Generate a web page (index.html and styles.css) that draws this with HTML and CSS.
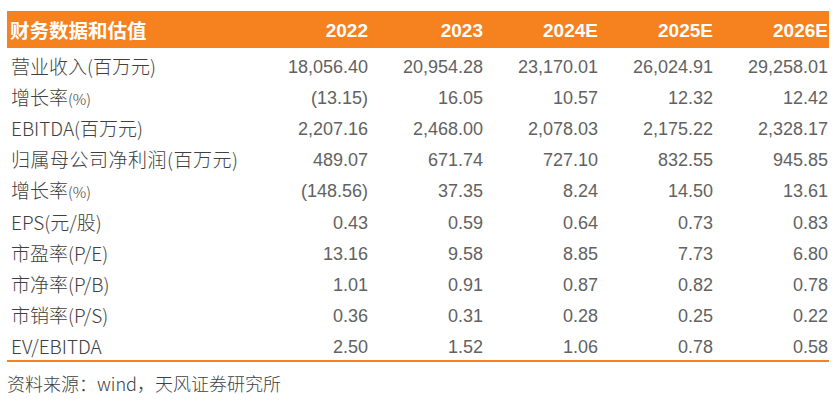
FILE: index.html
```html
<!DOCTYPE html>
<html lang="zh-CN">
<head>
<meta charset="utf-8">
<link rel="stylesheet" href="styles.css">
</head>
<body>
<div class="page">
  <div class="table">
    <div class="row head">
      <div class="cell label">财务数据和估值</div>
      <div class="cell">2022</div>
      <div class="cell">2023</div>
      <div class="cell">2024E</div>
      <div class="cell">2025E</div>
      <div class="cell">2026E</div>
    </div>
    <div class="row">
      <div class="cell label">营业收入(百万元)</div>
      <div class="cell">18,056.40</div><div class="cell">20,954.28</div><div class="cell">23,170.01</div><div class="cell">26,024.91</div><div class="cell">29,258.01</div>
    </div>
    <div class="row">
      <div class="cell label">增长率<span class="pct">(%)</span></div>
      <div class="cell">(13.15)</div><div class="cell">16.05</div><div class="cell">10.57</div><div class="cell">12.32</div><div class="cell">12.42</div>
    </div>
    <div class="row">
      <div class="cell label">EBITDA(百万元)</div>
      <div class="cell">2,207.16</div><div class="cell">2,468.00</div><div class="cell">2,078.03</div><div class="cell">2,175.22</div><div class="cell">2,328.17</div>
    </div>
    <div class="row">
      <div class="cell label wide">归属母公司净利润(百万元)</div>
      <div class="cell">489.07</div><div class="cell">671.74</div><div class="cell">727.10</div><div class="cell">832.55</div><div class="cell">945.85</div>
    </div>
    <div class="row">
      <div class="cell label">增长率<span class="pct">(%)</span></div>
      <div class="cell">(148.56)</div><div class="cell">37.35</div><div class="cell">8.24</div><div class="cell">14.50</div><div class="cell">13.61</div>
    </div>
    <div class="row">
      <div class="cell label">EPS(元/股)</div>
      <div class="cell">0.43</div><div class="cell">0.59</div><div class="cell">0.64</div><div class="cell">0.73</div><div class="cell">0.83</div>
    </div>
    <div class="row">
      <div class="cell label">市盈率(P/E)</div>
      <div class="cell">13.16</div><div class="cell">9.58</div><div class="cell">8.85</div><div class="cell">7.73</div><div class="cell">6.80</div>
    </div>
    <div class="row">
      <div class="cell label">市净率(P/B)</div>
      <div class="cell">1.01</div><div class="cell">0.91</div><div class="cell">0.87</div><div class="cell">0.82</div><div class="cell">0.78</div>
    </div>
    <div class="row">
      <div class="cell label">市销率(P/S)</div>
      <div class="cell">0.36</div><div class="cell">0.31</div><div class="cell">0.28</div><div class="cell">0.25</div><div class="cell">0.22</div>
    </div>
    <div class="row last">
      <div class="cell label">EV/EBITDA</div>
      <div class="cell">2.50</div><div class="cell">1.52</div><div class="cell">1.06</div><div class="cell">0.78</div><div class="cell">0.58</div>
    </div>
  </div>
  <div class="source">资料来源：wind，天风证券研究所</div>
</div>
</body>
</html>
```

FILE: styles.css
```css
html, body {
  margin: 0;
  padding: 0;
  background: #ffffff;
}
body {
  font-family: "Liberation Sans", "Noto Sans CJK SC", sans-serif;
}
.page {
  padding: 11px 8px 0 7px;
}
.table {
  width: 822px;
}
.row {
  display: grid;
  grid-template-columns: 246px repeat(5, 115px);
  height: 31.2px;
  align-items: center;
  color: #626262;
  font-size: 18px;
}
.row.head {
  height: 37px;
  background: #f5821f;
  color: #ffffff;
  font-size: 19px;
  font-weight: 700;
}
.row.last {
  border-bottom: 2px solid #f5821f;
  height: 31px;
}
.cell {
  text-align: right;
  white-space: nowrap;
  line-height: 1;
  padding-top: 6px;
}
.cell.label {
  text-align: left;
  padding-left: 4px;
  padding-top: 3px;
  color: #404040;
  font-family: "Noto Sans CJK SC", sans-serif;
  font-weight: 300;
  font-size: 19px;
}
.row.head .cell {
  padding-top: 2px;
}
.row.head .cell.label {
  color: #ffffff;
  padding-top: 0;
  padding-left: 3px;
  font-weight: 700;
  font-size: 19.5px;
}
.wide {
  letter-spacing: 0.5px;
}
.pct {
  font-size: 15px;
}
.source {
  margin-top: 8px;
  font-family: "Noto Sans CJK SC", sans-serif;
  font-weight: 300;
  font-size: 18px;
  color: #404040;
}
```
